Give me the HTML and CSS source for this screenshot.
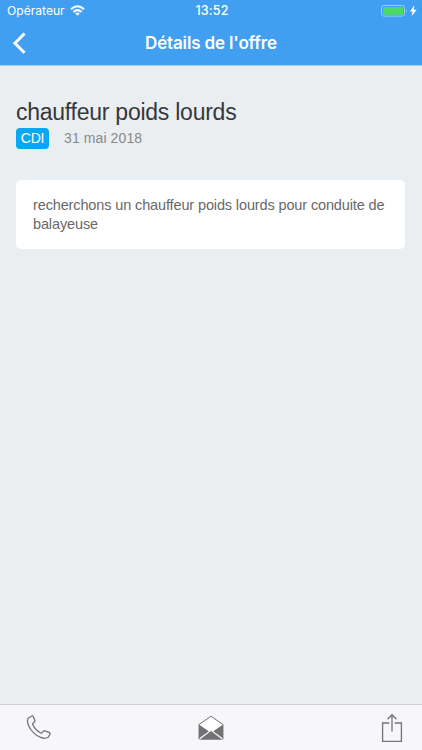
FILE: index.html
```html
<!DOCTYPE html>
<html lang="fr">
<head>
<meta charset="utf-8">
<meta name="viewport" content="width=device-width, initial-scale=1">
<title>Détails de l'offre</title>
<link rel="stylesheet" href="styles.css">
</head>
<body>
<div class="screen">
  <header class="header">
    <div class="status">
      <div class="carrier">
        <span class="carrier-name">Opérateur</span>
        <svg class="wifi" width="15" height="12" viewBox="0 0 15 12" fill="none" stroke="#fff" stroke-width="2"><path d="M1 4.3Q7.5-1.7 14 4.3M3.4 6.9Q7.5 3.3 11.6 6.9"/><path d="M5.1 8.3Q7.5 6.5 9.9 8.3L7.5 10.8Z" fill="#fff" stroke="none"/></svg>
      </div>
      <span class="time">13:52</span>
      <div class="power">
        <svg width="36" height="12" viewBox="0 0 36 12"><rect x=".5" y=".5" width="23" height="10.6" rx="2.3" fill="none" stroke="#9bcdf6"/><rect x="2" y="2" width="20" height="7.7" rx="1" fill="#4cd964"/><path d="M25 4q1.7 1.8 0 3.8z" fill="#9bcdf6"/><path d="M33.4.2L28.9 6.4h2.7l-1 4.9 5.1-6.6h-3z" fill="#fff"/></svg>
      </div>
    </div>
    <div class="nav">
      <svg class="back" width="16" height="24" viewBox="0 0 16 24" fill="none" stroke="#fff" stroke-width="3"><path d="M13.5 2.5L4 12.2l9.5 9.5"/></svg>
      <h1 class="nav-title">Détails de l'offre</h1>
      <span></span>
    </div>
  </header>
  <main class="content">
    <h2 class="job">chauffeur poids lourds</h2>
    <div class="meta"><span class="badge">CDI</span><span class="date">31 mai 2018</span></div>
    <p class="card">recherchons un chauffeur poids lourds pour conduite de balayeuse</p>
  </main>
  <footer class="toolbar">
    <svg width="26" height="26" viewBox="0 0 26 26" fill="none" stroke="#747476" stroke-width="1.3" stroke-linejoin="round"><path d="M2.2 3.2L5.8 1Q6.7.5 7.3 1.5L8.8 5.3Q9.2 6.3 8.4 7L7 8.2Q6.4 8.8 6.8 9.7Q9.2 14.8 14.6 18Q15.6 18.5 16.2 17.7L17.3 16.2Q18 15.5 19 15.8L23.5 17.6Q24.5 18.2 23.9 19.2L22.2 22.3C17.9 25 11.5 21.7 7.2 17.4C3.2 13.2 .1 7.2 2.2 3.2Z"/></svg>
    <svg class="mail" width="26" height="26" viewBox="0 0 26 26"><path d="M1.4 9.2L13 1.2l11.6 8-8.7 7.1L13 14.2l-2.9 2.1z" fill="#fff"/><path d="M.8 9.5L10.8 16.2.8 23.4zM25.2 9.5l-10 6.7 10 7.2zM1.5 24.7L13 16.1l11.5 8.6z" fill="#727274"/><path d="M1.2 24.3V9.3L13 1.3l11.8 8v15" fill="none" stroke="#727274" stroke-width="1" stroke-linejoin="round"/></svg>
    <svg class="share" width="22" height="30" viewBox="0 0 22 30" fill="none" stroke="#747476" stroke-width="1.3"><path d="M8.3 10H1.6v18.3h18.8V10h-6.7M11 18.5V1.8M6.6 6.3L11 1.8l4.4 4.5"/></svg>
  </footer>
</div>
</body>
</html>
```
FILE: styles.css
```css
* { box-sizing: border-box; }
body { margin: 0; }
h1, h2, p { margin: 0; font-weight: 400; }
svg { display: block; }
.screen {
  width: 422px;
  height: 750px;
  display: flex;
  flex-direction: column;
  background: #eaeef1;
  font-family: "Liberation Sans", Arial, sans-serif;
}
.header {
  height: 66px;
  background: #409ff0;
  border-bottom: 1px solid #a6cff0;
  color: #fff;
  font-family: Inter, sans-serif;
}
.status {
  height: 21px;
  display: grid;
  grid-template-columns: 1fr auto 1fr;
  padding: 0 5px 0 7px;
  align-items: center;
}
.carrier { display: flex; align-items: center; gap: 5px; font-size: 12.1px; }
.carrier-name { width: 58px; white-space: nowrap; }
.time { font-size: 12.5px; font-weight: 500; letter-spacing: .2px; }
.power { justify-self: end; }
.nav {
  height: 44px;
  display: grid;
  grid-template-columns: 1fr auto 1fr;
  padding: 0 11px;
  align-items: center;
}
.nav-title { font-size: 17px; font-weight: 600; letter-spacing: -.15px; white-space: nowrap; }
.content { flex: 1; padding: 33px 17px 0 16px; }
.job { font-size: 23px; line-height: 26px; letter-spacing: -.25px; color: #38383b; }
.meta { display: flex; margin-top: 3px; align-items: center; gap: 15px; height: 21px; }
.badge {
  width: 33px;
  height: 21px;
  line-height: 21px;
  border-radius: 4px;
  background: #08a7f2;
  color: #fff;
  font-size: 14px;
  letter-spacing: -.2px;
  text-align: center;
}
.date { font-size: 14px; line-height: 21px; letter-spacing: .1px; color: #88898b; }
.card {
  margin-top: 31px;
  height: 69px;
  padding: 16px 16px 0 17px;
  border-radius: 5px;
  background: #fff;
  color: #69696a;
  font-size: 14.5px;
  letter-spacing: -.13px;
  line-height: 19px;
}
.toolbar {
  height: 46px;
  display: grid;
  grid-template-columns: 1fr auto 1fr;
  align-items: center;
  padding: 0 19px 0 26px;
  border-top: 1px solid #cfd0d5;
  background: #f7f7f9;
}
.mail { margin-right: 7px; }
.share { justify-self: end; }
```
